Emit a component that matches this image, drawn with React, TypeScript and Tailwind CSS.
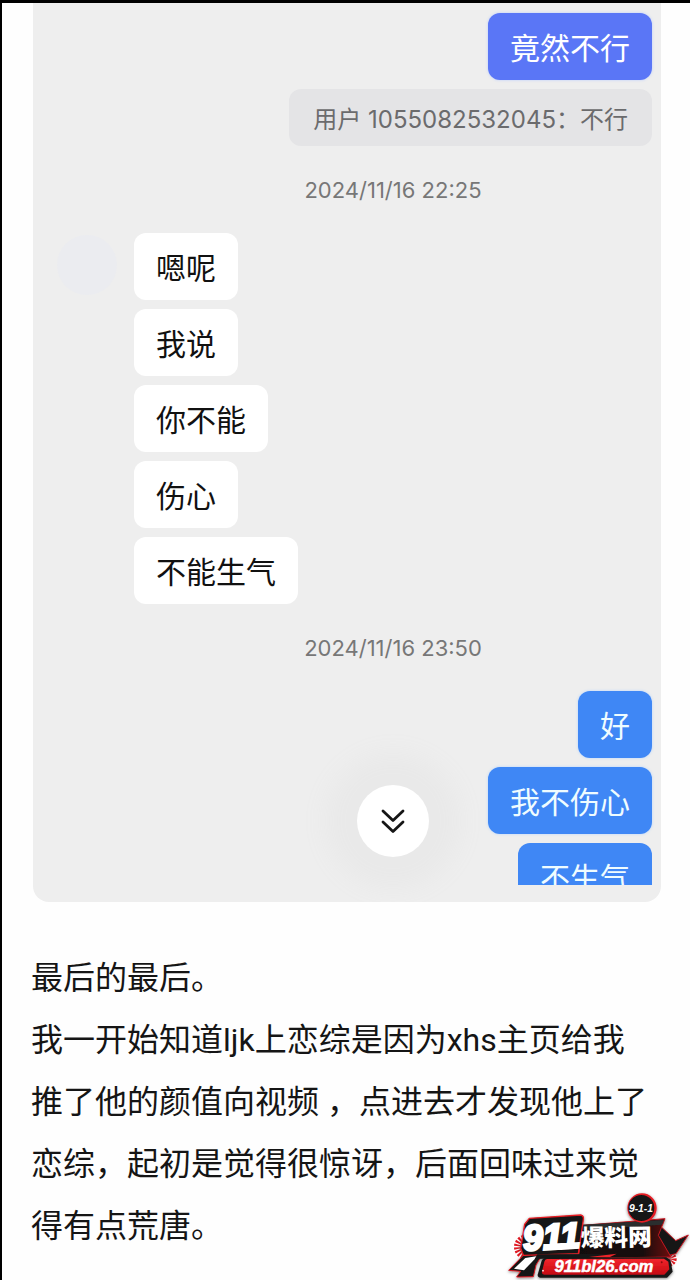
import { clsx } from 'clsx'

const received = ['嗯呢', '我说', '你不能', '伤心', '不能生气']

const paragraphs = [
  '最后的最后。',
  '我一开始知道ljk上恋综是因为xhs主页给我推了他的颜值向视频 ，点进去才发现他上了恋综，起初是觉得很惊讶，后面回味过来觉得有点荒唐。',
]

function Bubble({ text, className }: { text: string; className: string }) {
  return (
    <p className={clsx('w-fit shrink-0 rounded-xl px-[22px] pt-1 text-[30px] leading-[63px]', className)}>
      {text}
    </p>
  )
}

function Timestamp({ value }: { value: string }) {
  return (
    <div className="flex h-[87px] items-center justify-center pl-[101px]">
      <time className="text-[22px] leading-7 text-[#777777]">{value}</time>
    </div>
  )
}

function ScrollDownButton() {
  return (
    <button
      type="button"
      aria-label="Scroll to latest"
      className="flex size-18 items-center justify-center rounded-full bg-white shadow-[0_0_24px_32px_#e9e9e9]"
    >
      <svg viewBox="0 0 26 26" className="size-[26px]" fill="none" stroke="#161616" strokeWidth="2.8" strokeLinecap="round" strokeLinejoin="round">
        <path d="M3 3 L13 12.5 L23 3" />
        <path d="M3 14 L13 23.5 L23 14" />
      </svg>
    </button>
  )
}

// Spokes of the small red sunbursts on both sides of the badge
function Burst({ cx, cy, r }: { cx: number; cy: number; r: number }) {
  return (
    <circle cx={cx} cy={cy} r={r / 2} fill="none" stroke="#e01822" strokeWidth={r} strokeDasharray="3.5 2.5" />
  )
}

function Logo() {
  return (
    <svg viewBox="0 0 570 285" className="w-[190px]" role="img" aria-label="911爆料网 911bl26.com">
      <defs>
        <linearGradient id="bar" x1="0" y1="0" x2="0" y2="1">
          <stop offset="0" stopColor="#f3262c" />
          <stop offset="1" stopColor="#c40a12" />
        </linearGradient>
        <linearGradient id="plate" x1="0" y1="0" x2="1" y2="0">
          <stop offset="0" stopColor="#111111" />
          <stop offset="0.7" stopColor="#17090a" />
          <stop offset="1" stopColor="#6d0c12" />
        </linearGradient>
        <filter id="glow" x="-10%" y="-10%" width="120%" height="120%">
          <feDropShadow dx="0" dy="3" stdDeviation="4" floodColor="#000000" floodOpacity="0.5" />
        </filter>
      </defs>

      <Burst cx={80} cy={186} r={38} />
      <Burst cx={508} cy={222} r={22} />

      <g filter="url(#glow)">
        {/* tails */}
        <path d="M26 256 L70 211 L130 204 L108 240 L100 275 L50 276 L62 259 Z" fill="#141414" stroke="#d51b22" strokeWidth="3" />
        <path d="M42 251 L76 219 L113 213 L72 256 Z" fill="#ffffff" />
        <path d="M478 120 L527 167 L565 150 L528 206 L502 212 L470 154 Z" fill="#191919" stroke="#c5171e" strokeWidth="3" />
        {/* plates */}
        <path d="M247 121 L495 101 L475 151 L513 216 L235 220 Z" fill="url(#plate)" stroke="#c5171e" strokeWidth="3" />
        <path d="M245 119 L492 105 L486 119 L244 136 Z" fill="#2c2d2e" />
        <path d="M88 100 L242 90 Q252 92 250 104 L235 206 L70 211 L62 190 L74 118 Z" fill="#151515" stroke="#e51d24" strokeWidth="4" />
        <path d="M112 208 L345 207 L270 218 L104 222 Z" fill="#151515" />
        <path d="M267 216 L350 206 L330 216 Z" fill="#ee2429" />
        {/* address bar */}
        <path d="M137 218 L499 217 L511 225 L518 260 L501 278 L120 278 Q110 276 114 266 L124 230 Q127 219 137 218 Z" fill="#171717" />
        <path d="M141 222 L492 221 L505 230 L508 253 L493 269 L133 269 Q124 268 126 260 L133 230 Q135 223 141 222 Z" fill="url(#bar)" />
        <circle cx="129" cy="257" r="2.5" fill="#ffffff" />
        <circle cx="485" cy="232" r="3" fill="#8c0910" />
        {/* round badge */}
        <circle cx="426" cy="69" r="44" fill="#e41b22" />
        <circle cx="424" cy="69" r="39" fill="#121212" />
      </g>

      <g fill="#ffffff" textAnchor="middle">
        <text x="155" y="192" transform="rotate(-3 157 160)" fontFamily="Liberation Sans, sans-serif" fontStyle="italic" fontWeight="700" fontSize="108" stroke="#ffffff" strokeWidth="8">911</text>
        <text x="349" y="183" transform="rotate(-1 348 160)" fontFamily="Noto Sans CJK SC, sans-serif" fontWeight="900" fontSize="71">爆料网</text>
        <text x="423" y="80" fontFamily="Liberation Sans, sans-serif" fontStyle="italic" fontWeight="700" fontSize="31">9-1-1</text>
        <text x="312" y="261" fontFamily="Liberation Sans, sans-serif" fontStyle="italic" fontWeight="700" fontSize="50" stroke="#ffffff" strokeWidth="1.5">
          911bl26.com
        </text>
      </g>
    </svg>
  )
}

export default function App() {
  return (
    <main className="relative min-h-screen border-t-3 border-l-2 border-black bg-[#fefefe] font-['Inter','Noto_Sans_CJK_SC',sans-serif]">
      <section className="relative mr-[29px] ml-[31px] overflow-hidden rounded-b-2xl bg-[#eeeeee] pt-2.5 pr-[9px] pb-[17px]">
        <div className="absolute right-[9px] bottom-[45px] left-[101px] flex justify-center">
          <ScrollDownButton />
        </div>

        <div className="flex flex-col items-end gap-[9px]">
          <Bubble text="竟然不行" className="bg-[#5a76f6] text-white shadow-[0_0_3px_#b9ccff]" />
          <p className="rounded-xl bg-[#e4e4e6] px-6 pt-1 text-2xl leading-[53px] text-[#6b6b6d]">
            用户 1055082532045：不行
          </p>
        </div>

        <Timestamp value="2024/11/16 22:25" />

        <div className="flex">
          <div className="w-[101px] shrink-0 pl-6">
            <div className="mt-0.5 size-15 rounded-full bg-[#ebecf0]" />
          </div>
          <div className="flex flex-col items-start gap-[9px]">
            {received.map((text) => (
              <Bubble key={text} text={text} className="bg-white text-[#111111]" />
            ))}
          </div>
        </div>

        <Timestamp value="2024/11/16 23:50" />

        <div className="relative flex flex-col items-end gap-[9px]">
          <Bubble text="好" className="bg-[#3f87f5] text-[#effcff] shadow-[0_0_3px_#b5d5ff]" />
          <Bubble text="我不伤心" className="bg-[#3f87f5] text-[#effcff] shadow-[0_0_3px_#b5d5ff]" />
          {/* last message is cut off by the edge of the viewport */}
          <div className="h-[42px] overflow-hidden">
            <Bubble text="不生气" className="bg-[#3f87f5] text-[#effcff]" />
          </div>
        </div>
      </section>

      <article className="mt-[45px] mr-[39px] ml-[29px] font-['Roboto','Noto_Sans_CJK_SC',sans-serif] text-[32px] leading-[62px] text-[#151515]">
        {paragraphs.map((text) => (
          <p key={text}>{text}</p>
        ))}
      </article>

      <a href="#" className="absolute right-0 bottom-0">
        <Logo />
      </a>
    </main>
  )
}
